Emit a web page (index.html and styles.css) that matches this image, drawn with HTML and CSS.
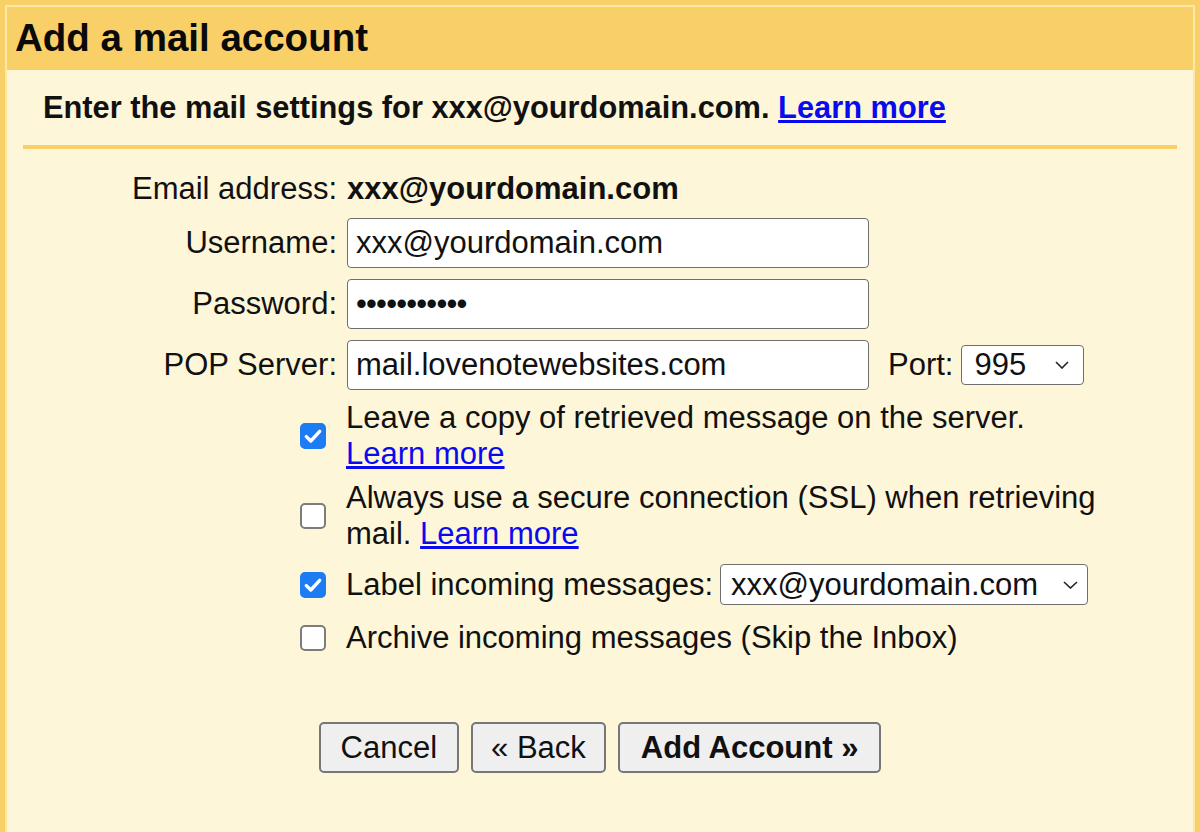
FILE: index.html
```html
<!DOCTYPE html>
<html lang="en">
<head>
    <meta charset="UTF-8">
    <title>Add a mail account</title>
    <link rel="stylesheet" href="styles.css">
</head>
<body>
    <div class="frame">
        <div class="panel">
            <div class="header">
                <h1>Add a mail account</h1>
            </div>

            <div class="intro">
                Enter the mail settings for xxx@yourdomain.com. <a href="#">Learn more</a>
            </div>

            <!-- account fields -->
            <div class="fields">
                <div class="label">Email address:</div>
                <div class="value">xxx@yourdomain.com</div>

                <div class="label">Username:</div>
                <div><input class="text" type="text" value="xxx@yourdomain.com"></div>

                <div class="label">Password:</div>
                <div><input class="text pass" type="password" value="ppppppppppp"></div>

                <div class="label">POP Server:</div>
                <div class="server">
                    <input class="text" type="text" value="mail.lovenotewebsites.com">
                    <span class="port-label">Port:</span>
                    <div class="select port">
                        <span>995</span>
                        <svg width="14" height="8" viewBox="0 0 14 8"><path d="M1 1 L7 7 L13 1" fill="none" stroke="#222" stroke-width="1.6"/></svg>
                    </div>
                </div>
            </div>

            <!-- options -->
            <div class="options">
                <div class="opt">
                    <span class="check on"><svg width="26" height="26" viewBox="0 0 26 26"><path d="M6.3 13.6 L10.8 18 L19.7 8.3" fill="none" stroke="#fff" stroke-width="3.4" stroke-linecap="round" stroke-linejoin="round"/></svg></span>
                    <div class="opt-text">Leave a copy of retrieved message on the server. <a href="#">Learn more</a></div>
                </div>
                <div class="opt">
                    <span class="check"></span>
                    <div class="opt-text">Always use a secure connection (SSL) when retrieving mail. <a href="#">Learn more</a></div>
                </div>
                <div class="opt opt-select">
                    <span class="check on"><svg width="26" height="26" viewBox="0 0 26 26"><path d="M6.3 13.6 L10.8 18 L19.7 8.3" fill="none" stroke="#fff" stroke-width="3.4" stroke-linecap="round" stroke-linejoin="round"/></svg></span>
                    <div class="opt-text">Label incoming messages:</div>
                    <div class="select label-select">
                        <span>xxx@yourdomain.com</span>
                        <svg width="15" height="8" viewBox="0 0 15 8"><path d="M1 1 L7.5 7 L14 1" fill="none" stroke="#222" stroke-width="1.6"/></svg>
                    </div>
                </div>
                <div class="opt opt-last">
                    <span class="check"></span>
                    <div class="opt-text">Archive incoming messages (Skip the Inbox)</div>
                </div>
            </div>

            <div class="actions">
                <button class="btn">Cancel</button>
                <button class="btn btn-back">&laquo; Back</button>
                <button class="btn btn-main">Add Account &raquo;</button>
            </div>
        </div>
    </div>
</body>
</html>
```

FILE: styles.css
```css
html, body {
    margin: 0;
    padding: 0;
}
body {
    background-color: #fef6d9;
    font-family: "Liberation Sans", Arial, sans-serif;
    font-size: 31px;
    color: #111;
}
.frame {
    min-height: 100vh;
    box-sizing: border-box;
    border: 5px solid #f9cf68;
    border-bottom: none;
    display: flex;
    flex-direction: column;
}
.panel {
    flex: 1;
    border: 2px solid #fde8a6;
    border-bottom: none;
}
.header {
    background-color: #f9cf68;
    height: 63px;
    padding-left: 8px;
    box-sizing: border-box;
}
.header h1 {
    margin: 0;
    padding-top: 9px;
    font-size: 38.5px;
    font-weight: bold;
    color: #0a0a0a;
}
.intro {
    margin: 0 16px;
    padding: 20px 20px 19px;
    border-bottom: 4px solid #f9cf68;
    font-weight: bold;
    font-size: 30.8px;
}
a {
    color: #0a0aee;
    text-decoration: underline;
}
.fields {
    margin: 22px 0 0 16px;
    display: grid;
    grid-template-columns: 314px 1fr;
    column-gap: 10px;
    row-gap: 11px;
    align-items: center;
}
.label {
    text-align: right;
}
.value {
    font-weight: bold;
}
.text {
    display: block;
    width: 522px;
    height: 50px;
    box-sizing: border-box;
    border: 1px solid #6e6e6e;
    border-radius: 4px;
    padding: 0 8px;
    background: #fff;
    font-family: "Liberation Sans", Arial, sans-serif;
    font-size: 31px;
    color: #111;
}
.pass {
    letter-spacing: -0.8px;
}
.server {
    display: flex;
    align-items: center;
}
.port-label {
    margin-left: 19px;
    margin-right: 8px;
}
.select {
    display: flex;
    align-items: center;
    justify-content: space-between;
    box-sizing: border-box;
    border: 1px solid #6e6e6e;
    border-radius: 4px;
    background: #fff;
}
.port {
    width: 123px;
    height: 40px;
    padding: 0 14px 0 12px;
}
.label-select {
    width: 368px;
    height: 41px;
    padding: 0 9px 0 10px;
    margin-left: 7px;
}
.options {
    margin: 10px 0 0 293px;
    display: flex;
    flex-direction: column;
    gap: 8px;
}
.opt {
    display: flex;
    align-items: center;
}
.opt-text {
    max-width: 756px;
}
.opt-select {
    padding: 4px 0 3px;
}
.opt-last {
    margin-top: 4px;
}
.check {
    flex: none;
    width: 26px;
    height: 26px;
    box-sizing: border-box;
    border: 2px solid #7c7c7c;
    border-radius: 5px;
    background: #fff;
    margin-right: 20px;
    position: relative;
}
.check.on {
    border-color: #1b7cf4;
    background: #1b7cf4;
}
.check svg {
    position: absolute;
    left: -2px;
    top: -2px;
}
.actions {
    margin-top: 66px;
    display: flex;
    justify-content: center;
    gap: 12px;
}
.btn {
    height: 51px;
    padding: 0 20px;
    border: 2px solid #777;
    border-radius: 5px;
    background-color: #efefef;
    font-family: "Liberation Sans", Arial, sans-serif;
    font-size: 31px;
    color: #111;
}
.btn-back {
    padding: 0 18px;
}
.btn-main {
    font-weight: bold;
    padding: 0 21px;
}
```
